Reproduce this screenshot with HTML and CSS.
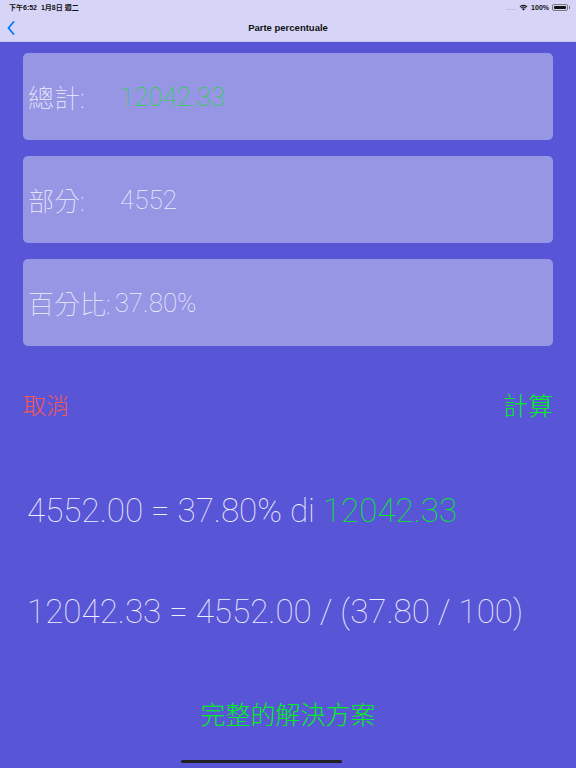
FILE: index.html
```html
<!DOCTYPE html>
<html lang="zh-Hant">
<head>
    <meta charset="UTF-8">
    <meta name="viewport" content="width=device-width, initial-scale=1.0">
    <title>Parte percentuale</title>
    <link rel="stylesheet" href="styles.css">
</head>
<body>
    <div id="top">
        <div id="status">
            <span>下午6:52&nbsp;&nbsp;1月8日 週二</span>
            <span id="sysicons">
                <span class="dots">....</span>
                <svg width="9" height="7" viewBox="0 0 18 14">
                    <path d="M9 13 L6 10 A4.3 4.3 0 0 1 12 10 Z" fill="#111"></path>
                    <path d="M3.5 7.5 A7.8 7.8 0 0 1 14.5 7.5 L13 9 A5.7 5.7 0 0 0 5 9 Z" fill="#111"></path>
                    <path d="M1 5 A11.3 11.3 0 0 1 17 5 L15.5 6.5 A9.2 9.2 0 0 0 2.5 6.5 Z" fill="#111"></path>
                </svg>
                <span>100%</span>
                <span class="battery"><span class="level"></span></span>
            </span>
        </div>
        <div id="nav">
            <svg id="back" width="8" height="14" viewBox="0 0 8 14">
                <polyline points="6.5,1 1.5,7 6.5,13" fill="none" stroke="#007aff" stroke-width="1.8" stroke-linecap="round" stroke-linejoin="round"></polyline>
            </svg>
            <span id="title">Parte percentuale</span>
        </div>
    </div>
    <div id="content">
        <div class="field">
            <span class="label">總計:</span>
            <span class="value green">12042.33</span>
        </div>
        <div class="field">
            <span class="label">部分:</span>
            <span class="value">4552</span>
        </div>
        <div class="field">
            <span class="label tight">百分比:</span>
            <span class="value">37.80%</span>
        </div>
        <div id="actions">
            <button id="cancel">取消</button>
            <button id="calc">計算</button>
        </div>
        <p class="equation">4552.00 = 37.80% di <span class="bright">12042.33</span></p>
        <p class="equation second">12042.33 = 4552.00 / (37.80 / 100)</p>
        <button id="solution">完整的解決方案</button>
    </div>
    <div id="home"></div>
</body>
</html>
```

FILE: styles.css
```css
:root {
    --bg: #5856d6;
    --bar: #d6d5f7;
    --card: #9696e5;
    --text: #eeeefc;
    --green: #22d83a;
    --bright: #00f021;
    --red: #f25757;
}
* {
    margin: 0;
    padding: 0;
    box-sizing: border-box;
}
body {
    width: 576px;
    height: 768px;
    background-color: var(--bg);
    font-family: 'Roboto', 'Noto Sans CJK TC', sans-serif;
    font-weight: 100;
    color: var(--text);
    overflow: hidden;
}
#top {
    background-color: var(--bar);
    border-bottom: 1px solid #c4c3ea;
    height: 42px;
    color: #111;
}
#status {
    display: flex;
    justify-content: space-between;
    align-items: center;
    height: 14px;
    padding: 0 8px 0 9px;
    font-family: 'Liberation Sans', 'Noto Sans CJK TC', sans-serif;
    font-size: 7px;
    font-weight: 700;
}
#sysicons {
    display: flex;
    align-items: center;
    gap: 3px;
}
.dots {
    color: #888;
    letter-spacing: 0.5px;
    font-weight: 400;
}
.battery {
    display: inline-block;
    width: 16px;
    height: 7px;
    border: 1px solid #777;
    border-radius: 2px;
    padding: 1px;
    position: relative;
}
.battery::after {
    content: '';
    position: absolute;
    right: -3px;
    top: 1.5px;
    width: 1.5px;
    height: 2.5px;
    background: #777;
}
.level {
    display: block;
    height: 100%;
    background: #111;
    border-radius: 1px;
}
#nav {
    display: flex;
    align-items: center;
    justify-content: center;
    height: 27px;
    position: relative;
}
#back {
    position: absolute;
    left: 7px;
    top: 7px;
}
#title {
    font-family: 'Liberation Sans', sans-serif;
    font-size: 9.5px;
    font-weight: 700;
    color: #111;
}
#content {
    padding: 11px 23px 0;
}
.field {
    display: flex;
    align-items: center;
    height: 87px;
    margin-bottom: 16px;
    padding-left: 5px;
    background-color: var(--card);
    border-radius: 5px;
    font-size: 26px;
}
.label {
    width: 92px;
}
.label.tight {
    width: auto;
    margin-right: 4px;
}
.green {
    color: var(--green);
}
.bright {
    color: var(--bright);
}
#actions {
    display: flex;
    justify-content: space-between;
    align-items: center;
    margin-top: 40px;
}
button {
    background: none;
    border: none;
    font-family: 'Noto Sans CJK TC', sans-serif;
    font-weight: 300;
    font-size: 23px;
    cursor: pointer;
}
#cancel {
    color: var(--red);
}
#calc {
    color: var(--bright);
    font-size: 25px;
}
.equation {
    font-size: 33.2px;
    margin-top: 69px;
    padding-left: 4px;
    white-space: nowrap;
}
.equation.second {
    margin-top: 62px;
}
#solution {
    display: block;
    margin: 64px auto 0;
    color: var(--bright);
    font-size: 25px;
}
#home {
    position: absolute;
    left: 181px;
    top: 760px;
    width: 161px;
    height: 3px;
    border-radius: 2px;
    background-color: #222;
}
```
